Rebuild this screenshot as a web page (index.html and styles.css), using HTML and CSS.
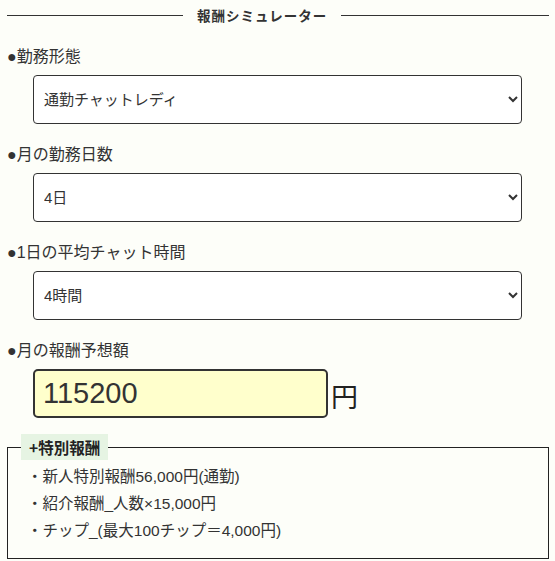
FILE: index.html
```html
<!DOCTYPE html>
<html lang="ja">
<head>
<meta charset="utf-8">
<title>報酬シミュレーター</title>
<link rel="stylesheet" href="styles.css">
</head>
<body>
<div class="sim">
  <div class="title"><span class="line line-left"></span><span class="title-text">報酬シミュレーター</span><span class="line"></span></div>

  <div class="group">
    <div class="label">●勤務形態</div>
    <select class="sel">
      <option>通勤チャットレディ</option>
      <option>在宅チャットレディ</option>
    </select>
  </div>

  <div class="group">
    <div class="label">●月の勤務日数</div>
    <select class="sel">
      <option>4日</option>
      <option>8日</option>
    </select>
  </div>

  <div class="group">
    <div class="label">●1日の平均チャット時間</div>
    <select class="sel">
      <option>4時間</option>
      <option>8時間</option>
    </select>
  </div>

  <div class="group">
    <div class="label">●月の報酬予想額</div>
    <div class="result">
      <input class="amount" type="text" value="115200" readonly>
      <span class="yen">円</span>
    </div>
  </div>

  <fieldset class="bonus">
    <legend class="bonus-title">+特別報酬</legend>
    <ul class="bonus-list">
      <li>・新人特別報酬56,000円(通勤)</li>
      <li>・紹介報酬_人数×15,000円</li>
      <li>・チップ_(最大100チップ＝4,000円)</li>
    </ul>
  </fieldset>
</div>
</body>
</html>
```
FILE: styles.css
```css
html, body {
  margin: 0;
  padding: 0;
  background: #fdfef9;
}
body {
  font-family: "Liberation Sans", "Noto Sans CJK JP", sans-serif;
  color: #333;
}
.sim {
  padding: 0 6px 0 7px;
}
.title {
  display: flex;
  align-items: center;
  height: 30px;
}
.line {
  flex: 1;
  height: 1px;
  background: #333;
}
.line-left {
  flex: 0 0 176px;
}
.title-text {
  font-family: "Noto Sans CJK JP", sans-serif;
  font-weight: bold;
  font-size: 13.5px;
  letter-spacing: 1px;
  line-height: 30px;
  margin: 0 14px;
}
.group {
  margin-top: 15px;
}
.group + .group {
  margin-top: 19px;
}
.label {
  font-size: 16px;
  line-height: 24px;
  height: 24px;
  margin-bottom: 6px;
  color: #333;
}
.sel {
  display: block;
  margin-left: 26px;
  width: 489px;
  height: 49px;
  box-sizing: border-box;
  border: 1px solid #333;
  border-radius: 4px;
  background: #fff;
  padding: 0 8px 0 6px;
  font-family: "Liberation Sans", "Noto Sans CJK JP", sans-serif;
  font-size: 15px;
  color: #333;
}
.result {
  display: flex;
  align-items: center;
  margin-left: 26px;
}
.amount {
  width: 295px;
  height: 49px;
  box-sizing: border-box;
  border: 2px solid #333;
  border-radius: 5px;
  background: #ffffcc;
  padding: 0 8px;
  font-family: "Liberation Sans", sans-serif;
  font-size: 29px;
  color: #333;
  outline: none;
}
.yen {
  font-size: 27px;
  line-height: 34px;
  margin: 4px 0 0 3px;
  color: #222;
  font-family: "Noto Sans CJK JP", sans-serif;
}
.bonus {
  margin: 16px 0 0 0;
  border: 1px solid #222;
  padding: 0 10px 13px 19px;
  width: 542px;
  height: 125px;
  box-sizing: border-box;
}
.bonus-title {
  background: #e6f4e3;
  padding: 0 8px;
  margin-left: -6px;
  font-family: "Noto Sans CJK JP", sans-serif;
  font-weight: bold;
  font-size: 15.5px;
  line-height: 26px;
  color: #222;
}
.bonus-list {
  list-style: none;
  margin: 3px 0 0 0;
  padding: 0;
}
.bonus-list li {
  font-size: 15.5px;
  line-height: 27px;
  color: #333;
}
```
